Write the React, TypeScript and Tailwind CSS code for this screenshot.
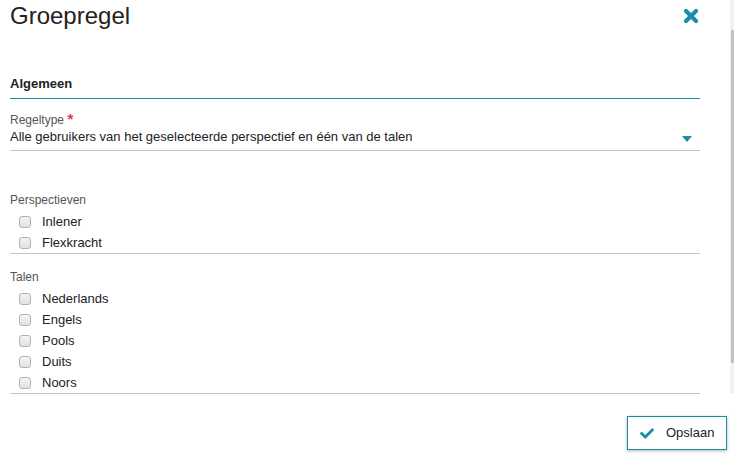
import React from 'react';

const perspectieven = ['Inlener', 'Flexkracht'];
const talen = ['Nederlands', 'Engels', 'Pools', 'Duits', 'Noors'];

// grijze standaard-checkbox
function CheckRow({ label }: { label: string }) {
  return (
    <div className="flex h-[21px] items-center">
      <span className="ml-[9px] h-[12px] w-[12px] rounded-[3px] border border-[#b3b3b3] bg-gradient-to-b from-[#f4f4f4] to-[#e1e1e1]" />
      <span className="ml-[11px] text-[13px] leading-4 text-[#222]">{label}</span>
    </div>
  );
}

function Section({ title, items, first }: { title: string; items: string[]; first?: boolean }) {
  return (
    <div className={first ? 'mt-[42px]' : 'mt-[16px]'}>
      <div className="text-[12px] leading-[14px] text-[#555]">{title}</div>
      <div className="mt-[4px] border-b border-[#c4c4c4]">
        {items.map((item) => (
          <CheckRow key={item} label={item} />
        ))}
      </div>
    </div>
  );
}

export default function App() {
  return (
    <div className="flex h-[465px] w-[734px] flex-col bg-white font-['Liberation_Sans',Arial,sans-serif]">
      <div className="flex h-[394px]">
        <div className="flex-1 pl-[10px] pr-[30px]">
          {/* kop */}
          <div className="mt-[2px] flex h-[28px] items-center justify-between">
            <h1 className="text-[24px] leading-[28px] text-[#222]">Groepregel</h1>
            <svg width="16" height="16" viewBox="0 0 16 16" className="mr-[1px]">
              <path d="M3 3L13 13M13 3L3 13" stroke="#168fa8" strokeWidth="4.2" strokeLinecap="round" />
            </svg>
          </div>

          {/* algemeen */}
          <div className="mt-[46px] text-[13px] font-bold leading-4 text-[#222]">Algemeen</div>
          <div className="mt-[6px] h-px bg-[#168fa8]" />

          <div className="mt-[13px] h-[14px] overflow-visible text-[12px] leading-[14px] text-[#555]">
            Regeltype <span className="text-[15px] font-bold leading-[14px] text-[#e3344f]">*</span>
          </div>
          <div className="flex items-center justify-between border-b border-[#c4c4c4] pb-[5px] pt-[3px]">
            <span className="text-[13px] leading-4 text-[#222]">
              Alle gebruikers van het geselecteerde perspectief en één van de talen
            </span>
            <svg width="10" height="6" viewBox="0 0 10 6" className="mr-[8px] mt-[3px]">
              <path d="M0 0H10L5 6Z" fill="#168fa8" />
            </svg>
          </div>

          <Section title="Perspectieven" items={perspectieven} first />
          <Section title="Talen" items={talen} />
        </div>

        {/* scrollbalk */}
        <div className="flex h-[393px] w-[4px] flex-col bg-[#f1f1f1]">
          <div className="ml-auto mt-[30px] h-[333px] w-[3px] bg-[#c1c1c1]" />
        </div>
      </div>

      <div className="flex justify-end pr-[7px] pt-[22px]">
        <button className="flex h-[34px] w-[100px] items-center border border-[#168fa8] bg-white pl-[12px] shadow-[0_1px_3px_rgba(0,0,0,0.3)]">
          <svg width="14" height="11" viewBox="0 64 512 384">
            <path
              d="M173.898 439.404l-166.4-166.4c-9.997-9.997-9.997-26.206 0-36.204l36.203-36.204c9.997-9.998 26.207-9.998 36.204 0L192 312.69 432.095 72.596c9.997-9.997 26.207-9.997 36.204 0l36.203 36.204c9.997 9.997 9.997 26.206 0 36.204l-294.4 294.401c-9.998 9.997-26.207 9.997-36.204-.001z"
              fill="#168fa8"
            />
          </svg>
          <span className="ml-[12px] text-[13px] leading-4 text-[#222]">Opslaan</span>
        </button>
      </div>
    </div>
  );
}
